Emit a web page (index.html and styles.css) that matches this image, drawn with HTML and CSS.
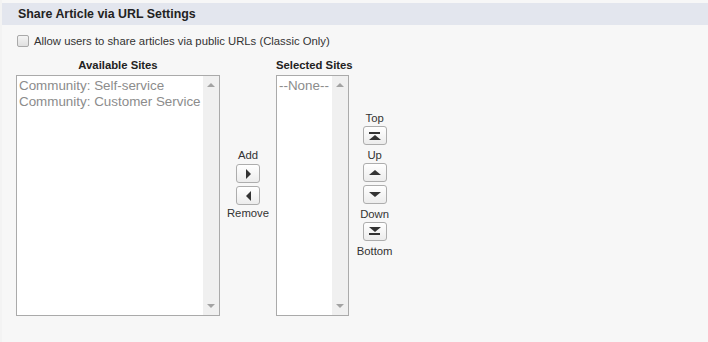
FILE: index.html
```html
<!DOCTYPE html>
<html lang="en">
<head>
    <meta charset="UTF-8">
    <title>Share Article via URL Settings</title>
    <link rel="stylesheet" href="styles.css">
</head>
<body>
    <div class="panel">
        <h3 class="panel-head">Share Article via URL Settings</h3>
        <label class="option">
            <input type="checkbox" class="check">
            <span>Allow users to share articles via public URLs (Classic Only)</span>
        </label>
        <div class="picker">
            <div class="col col-available">
                <div class="col-title">Available Sites</div>
                <div class="listbox listbox-wide">
                    <div class="list-items">
                        <div>Community: Self-service</div>
                        <div>Community: Customer Service</div>
                    </div>
                    <div class="scroll">
                        <span class="arrow-up"></span>
                        <span class="arrow-down"></span>
                    </div>
                </div>
            </div>
            <div class="buttons buttons-move">
                <div class="btn-label">Add</div>
                <button class="btn"><span class="tri-right"></span></button>
                <button class="btn btn-gap"><span class="tri-left"></span></button>
                <div class="btn-label">Remove</div>
            </div>
            <div class="col col-selected">
                <div class="col-title">Selected Sites</div>
                <div class="listbox listbox-narrow">
                    <div class="list-items">
                        <div>--None--</div>
                    </div>
                    <div class="scroll">
                        <span class="arrow-up"></span>
                        <span class="arrow-down"></span>
                    </div>
                </div>
            </div>
            <div class="buttons buttons-order">
                <div class="btn-label">Top</div>
                <button class="btn"><span class="bar"></span><span class="tri-up"></span></button>
                <div class="btn-label">Up</div>
                <button class="btn"><span class="tri-up"></span></button>
                <button class="btn btn-gap"><span class="tri-down"></span></button>
                <div class="btn-label">Down</div>
                <button class="btn"><span class="tri-down"></span><span class="bar"></span></button>
                <div class="btn-label">Bottom</div>
            </div>
        </div>
    </div>
</body>
</html>
```

FILE: styles.css
```css
html, body {
    margin: 0;
    padding: 0;
    height: 100%;
}
body {
    font-family: "Liberation Sans", Arial, sans-serif;
    color: #333;
    background-color: #fbfbfb;
}
.panel {
    background-color: #f7f7f7;
    min-height: 100%;
    padding-top: 3px;
    box-sizing: border-box;
    border-left: 2px solid #f3f3f3;
}
.panel-head {
    margin: 0;
    height: 22px;
    line-height: 22px;
    padding-left: 16px;
    background-color: #e3e6ee;
    font-size: 12.4px;
    font-weight: bold;
    color: #222;
}
.option {
    display: flex;
    align-items: center;
    padding: 10px 0 0 15px;
    font-size: 11.3px;
    color: #333;
}
.check {
    -webkit-appearance: none;
    appearance: none;
    width: 12px;
    height: 12px;
    margin: 0 5px 0 0;
    border: 1px solid #a9a9a9;
    border-radius: 2px;
    background: linear-gradient(#f4f4f4, #e0e0e0);
}
.picker {
    display: flex;
    align-items: flex-start;
    padding: 12px 0 0 14px;
}
.col {
    display: flex;
    flex-direction: column;
    align-items: center;
}
.col-selected {
    align-items: flex-start;
}
.col-title {
    font-size: 11.3px;
    font-weight: bold;
    color: #222;
    height: 16px;
    line-height: 12px;
}
.listbox {
    display: flex;
    height: 241px;
    background-color: #fff;
    border: 1px solid #aaa;
    box-sizing: border-box;
}
.listbox-wide {
    width: 204px;
}
.listbox-narrow {
    width: 73px;
}
.list-items {
    flex: 1;
    padding: 2px 0 0 2px;
    font-size: 13.4px;
    line-height: 16px;
    color: #8c8c8c;
    white-space: nowrap;
    overflow: hidden;
}
.scroll {
    width: 16px;
    background-color: #f0f0f0;
    display: flex;
    flex-direction: column;
    justify-content: space-between;
    align-items: center;
    padding: 7px 0 7px;
}
.arrow-up, .arrow-down {
    width: 0;
    height: 0;
    border-left: 4px solid transparent;
    border-right: 4px solid transparent;
}
.arrow-up {
    border-bottom: 4px solid #a3a3a3;
}
.arrow-down {
    border-top: 4px solid #a3a3a3;
}
.buttons {
    display: flex;
    flex-direction: column;
    align-items: center;
    font-size: 11.3px;
}
.buttons-move {
    width: 56px;
    margin-top: 90px;
}
.buttons-move .btn-label:first-child {
    margin: 0 0 3px;
}
.buttons-move .btn-label:last-child {
    margin: 2px 0 0;
}
.buttons-order {
    width: 44px;
    margin-top: 53px;
}
.buttons-order .btn-label {
    margin: 4px 0 2px;
}
.buttons-order .btn-label:first-child {
    margin: 0 0 2px;
}
.btn-label {
    height: 12px;
    line-height: 12px;
    color: #333;
}
.btn {
    box-sizing: border-box;
    width: 24px;
    height: 19px;
    padding: 0;
    border: 1px solid #adadad;
    border-radius: 3px;
    background: linear-gradient(#ffffff, #ececec);
    display: flex;
    flex-direction: column;
    align-items: center;
    justify-content: center;
}
.btn-gap {
    margin-top: 3px;
}
.tri-right, .tri-left {
    width: 0;
    height: 0;
    border-top: 5px solid transparent;
    border-bottom: 5px solid transparent;
}
.tri-right {
    border-left: 5px solid #333;
}
.tri-left {
    border-right: 5px solid #333;
}
.tri-up, .tri-down {
    width: 0;
    height: 0;
    border-left: 6px solid transparent;
    border-right: 6px solid transparent;
}
.tri-up {
    border-bottom: 5px solid #333;
}
.tri-down {
    border-top: 5px solid #333;
}
.bar {
    width: 11px;
    height: 2px;
    background-color: #333;
    margin: 1px 0;
}
```
